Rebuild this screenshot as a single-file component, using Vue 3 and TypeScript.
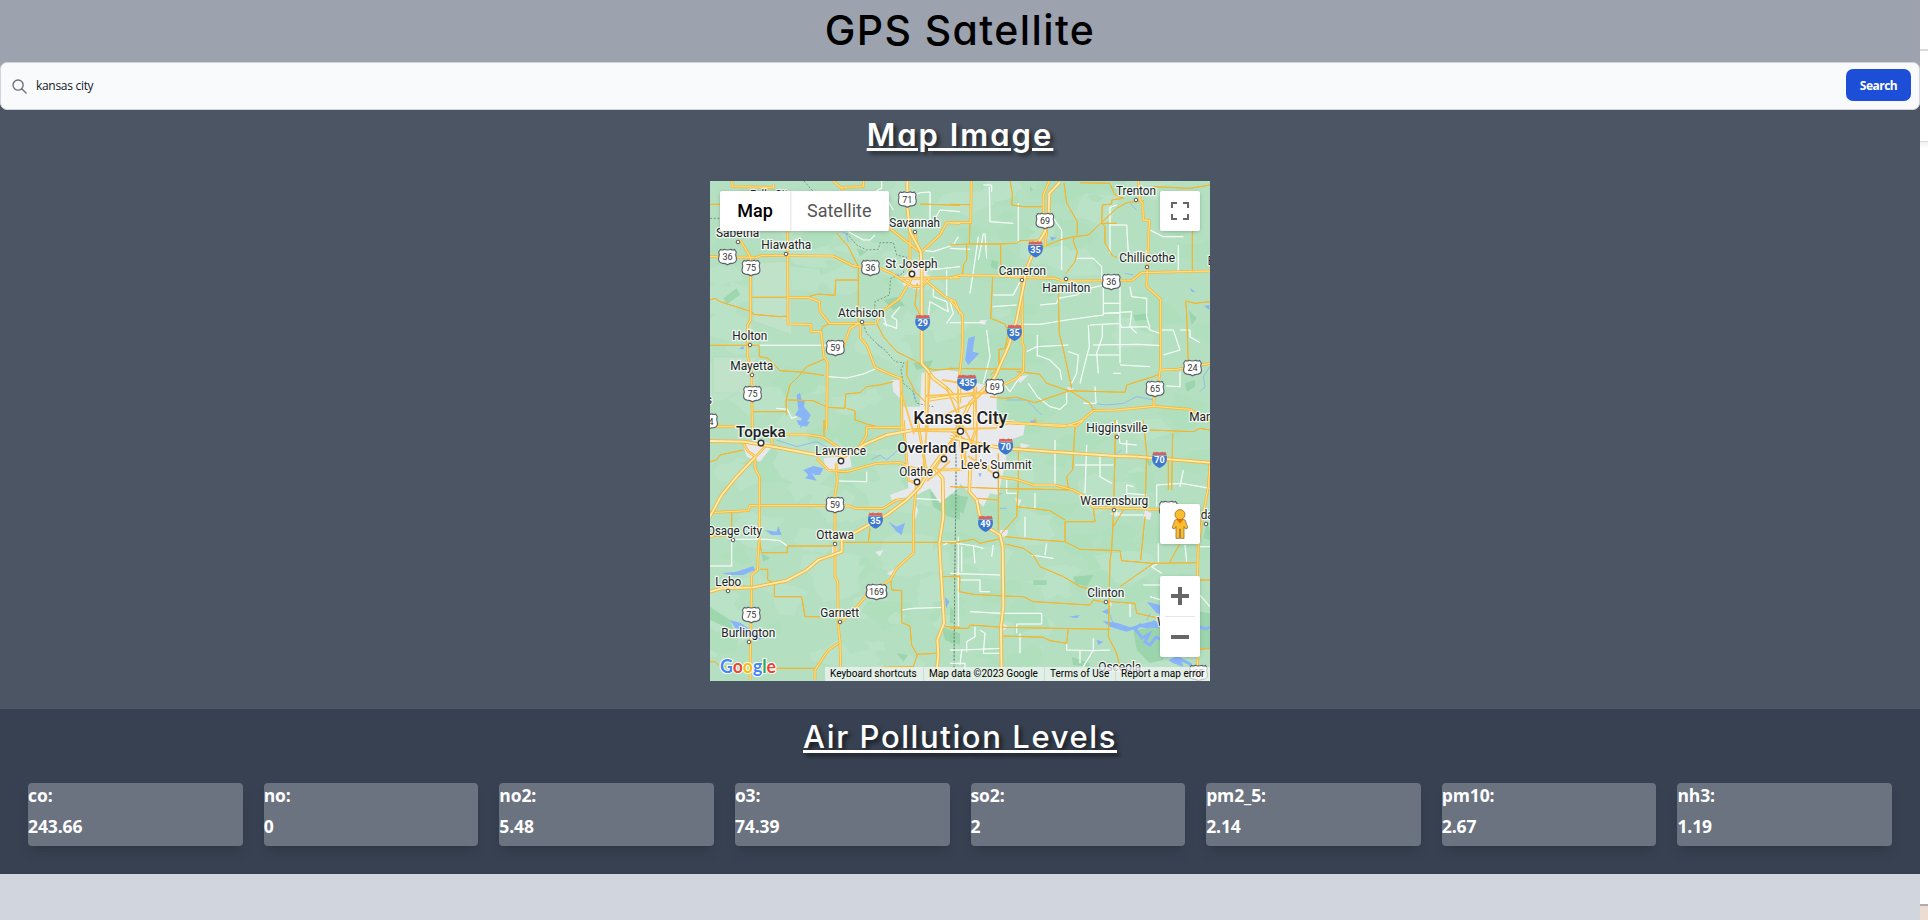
<script setup lang="ts">
type Kind = 'local' | 'minor' | 'primary' | 'highway'
interface Sheet {
  transform: string
  roads: Record<Kind, string>
  border: string
  urban: string
  water: string
  river: string
  forest: string
}
interface Place { name: string; x: number; y: number; w: number; size?: number; weight?: number }
interface Dot { x: number; y: number; r: number }
interface Shield { n: string; x: number; y: number }

const readings = [
  { label: 'co', value: '243.66' },
  { label: 'no', value: '0' },
  { label: 'no2', value: '5.48' },
  { label: 'o3', value: '74.39' },
  { label: 'so2', value: '2' },
  { label: 'pm2_5', value: '2.14' },
  { label: 'pm10', value: '2.67' },
  { label: 'nh3', value: '1.19' },
]

// Four map sheets, each drawn on its own grid at three units per pixel.
const sheets: Sheet[] = [
  {
    transform: 'translate(-10 -11) scale(.33333)',
    roads: {
      local: 'M178 526H380M382 620L440 624 490 612 525 597M445 185L490 210 510 210 525 195M228 715L262 718 275 745 290 740M690 66L690 175M545 33V55L530 62M625 85L660 68 690 66M660 240L700 245 760 225 775 200M550 430L560 470M600 410L575 440 590 450V475L550 460M700 350V380L740 395 745 425 690 395 685 440M690 172L720 120 780 125M690 300L780 290M740 460L760 430 750 395M740 300V380M565 95L580 120',
      minor: 'M30 103H60M155 382H264M325 380L355 372 405 376 407 330H475M475 288V458M30 390L45 385 60 395 155 425 160 433 240 440 264 438M30 526H178M178 528V560L205 565 240 602 300 606 372 616M372 568L320 590 300 615 270 645 258 690 260 735M262 690L340 692 382 712 435 715 437 672 480 668 500 650 540 645 580 635M440 715L465 722V750L510 765 540 772 600 772M530 460L550 500 590 545 640 570 665 585 700 600 780 595M622 572L620 615 645 665 680 700M410 190L445 230 475 290M363 485L368 470 390 460M660 102L780 106M157 725H260M652 340L645 405 662 440',
      primary: 'M95 33L97 50 220 52V42M400 33L430 60M420 52L490 50V33M540 295L575 310 600 325 780 323M780 160L740 158 720 195 665 245M665 320L700 350 735 380 765 395 780 430M635 325L600 385 545 425 530 460M30 260L170 262 185 256 400 258 460 288 485 292M120 210L152 262V450L143 465V560L155 610 157 780M262 180L264 462 333 464V484L363 486 372 560 382 575 380 780M264 382H325L358 395 360 425 388 460H525M480 460L482 505 500 525 525 592 575 615 603 625 606 780M480 458L450 475 430 530M630 190V330M565 172L620 215 665 250M645 190L655 240M600 325L640 350 665 350 690 325M30 770L110 770',
      highway: 'M622 33V75M622 110L630 185 662 245 665 300V580Q685 600 700 625L740 655 780 700M680 610V780M680 690L780 675',
    },
    border: 'M30 145H60M312 33L335 60 350 70M440 190L470 225 500 240 535 238 540 218H580L590 255 620 262 610 310 572 325 568 375 525 395 522 450M490 462L500 490 535 525 550 535 585 575 612 578 603 600 610 640 640 665 650 700 700 710',
    urban: 'M575 630L600 630 605 690 580 665ZM665 610L740 600 780 605V780H610V710H660ZM610 320L650 275 690 320 655 360 610 345Z',
    water: 'M290 675L300 668 305 690 315 690 312 710 332 735 325 750 300 775 305 745 285 735 295 720ZM117 536L130 528 132 538Z',
    river: 'M425 185L438 190 445 215M587 310L600 318M530 520L545 535M640 665L645 690',
    forest: 'M70 385L110 355 120 375 80 402ZM550 390L590 380 615 405 580 420ZM640 580L700 570 690 590 650 600ZM470 235L500 245 480 260Z',
  },
  {
    transform: 'translate(240 -11) scale(.33333)',
    roads: {
      local: 'M100 45H125V65M118 50L120 155 190 160M105 190L110 265M100 190L85 270M85 200L75 270 60 370M0 235L60 238M310 145L335 180V300M205 100V220M500 105L480 112V250M480 165H530L535 250M590 240V335M600 180L640 200H700M685 225V303M380 265H430L455 290V335M460 345V435L350 450 270 463H210M270 405L320 400 325 385 380 375 400 360 460 345M128 410L200 405M130 375H190L210 335M510 350V580M540 350L545 380 590 385V440L600 475M460 400H512M460 430L545 425 540 470 560 490M415 465L418 530 410 560 390 640M420 465L510 460 515 472 590 470 600 480 630 490M430 525L565 523 632 527M415 555H510M440 550L445 610M510 585L600 590M632 480H670L690 540 640 555M690 480H720V500L750 518M690 605V650L650 648M0 458H100M110 480L120 560 105 620 100 640M230 545L260 530 355 525M260 555L300 570 330 600 335 630M355 545L385 555 380 610 365 640M350 665V700L330 718 300 710 262 680 235 640M435 650L438 700H400M457 465V500L440 550M262 495V560M160 640L180 665 210 620M490 610H512',
      minor: 'M180 33L187 70 185 105 220 110H275M0 103L60 104M60 160L58 222 0 225M60 222H150L200 220 210 212 262 210M50 225V270L40 285 38 312M152 222V318M128 318L122 445 165 462 175 490 165 535 147 538V595L120 615M275 232L330 210 372 200 370 215 382 245 375 275 348 310M342 40L350 100 382 155V195M372 200L415 195 450 162 500 115 530 98 580 92M390 38L480 40 495 75 520 85 485 90V102L457 105 455 160 465 170V220L488 258 500 262M455 160H500M332 340L325 380 328 490 345 560 365 655M200 605L268 612 290 640 355 662 525 667 530 645 610 620 632 610M0 595L220 598M727 180V303M610 50L720 55 780 45M780 395L735 400 707 393 710 430 715 590M120 680L160 685 200 682 255 698 360 662 420 700 430 720M255 745L260 765',
      primary: 'M0 325L30 315 150 318 215 322 315 325 335 333 545 332 575 308 780 303M565 33L570 90 578 100 580 150 598 152 590 350 632 388V590L625 640 612 655V708M216 330L217 520 222 530 220 605 200 625 120 665M64 33L62 158 0 158M0 390L38 435V530L28 620M612 709L500 720 430 722 390 755 340 770 230 762 120 755M612 709L720 718 780 755M629 600L680 598 780 580M298 33L280 75V130L290 180 285 230',
      highway: 'M330 36L298 70 296 130 285 185 255 235 228 300 222 340 200 450 175 530 135 620 100 660 60 700 20 780M28 620V700M75 650V780M0 680L90 670',
    },
    border: '',
    urban: 'M0 610L70 635 140 655V780H0ZM90 450L110 450 105 465 90 460ZM200 620L235 615 210 640ZM350 650L372 655 360 665Z',
    water: 'M55 505L75 498 68 545 88 550 55 585 45 570ZM300 200L320 203 305 212ZM720 353L737 367 725 365ZM762 408L778 405V420ZM240 752L260 750 250 770Z',
    river: 'M430 700L470 705 520 700 560 680 612 690M170 690L230 690 260 720 275 735M780 590L760 620 765 650 750 665M525 310L550 315M560 120L540 100',
    forest: 'M125 270L145 275 140 300 122 290ZM550 435L595 430 590 450 555 452ZM705 640L735 630 735 650 710 665ZM715 420L740 445 725 465ZM240 50L250 60 240 65Z',
  },
  {
    transform: 'translate(-10 239) scale(.33333)',
    roads: {
      local: 'M100 358H200L240 362 262 378M95 360V438H30M410 183L500 185V155M640 235L725 240M605 570L640 565 730 562M775 350V470M730 375L742 370M728 365H780',
      minor: 'M95 275V330M30 125L50 120 60 105 130 90M30 348H95M178 360L185 398H262V378H400M430 367H780M180 448H203V480L223 490V530H305L315 590H360M510 325L505 365M573 482L575 510 605 512V608L630 618 635 675 652 705 640 740 550 742V760M150 745H345M30 725H45L60 740H80M650 703L708 700M730 470L780 468M735 620L780 622M372 0V50M30 5L60 20 85 20',
      primary: 'M165 112V145L178 170V350L172 450 155 465 150 780M408 130L412 185 405 225V470L413 485 415 620 420 665 422 740M420 610L480 550 500 525 570 480 590 445 640 400V290L650 190M415 670L385 690 345 750V780M350 115L385 150 440 155 530 130 600 128 640 145 720 150 780 148M30 278L145 272 150 257H370L450 258 465 265H550L590 240 610 238M230 42L330 45 370 52 420 85M130 70L145 95 170 112M470 95L500 45V22H610M610 0L625 180 650 190M652 0L680 160M216 42V75M200 75L165 112M30 350H40',
      highway: 'M30 515L65 505 160 502 260 482 320 450 355 420 425 395V360L500 318 560 285 620 240 660 200 680 165 720 110 760 60M30 63L130 65 230 82 350 105 400 100 430 110 500 70 560 45 640 30 780 32M30 290L65 225 110 170 165 112M708 150L728 175 730 290 718 370 732 610 712 660 715 700 708 780',
    },
    border: 'M768 0V210L764 480 762 780',
    urban: 'M610 0H780V200L720 250 690 205 650 225 575 240 570 225 625 205ZM130 75L180 60 220 75 180 125 140 110ZM370 115L450 105 455 140 380 155ZM398 370L412 380 410 405 395 400ZM525 395L550 390 540 410ZM560 460L590 445 580 470ZM640 245L655 270 645 300Z',
    water: 'M310 150L340 138 370 145 360 165 345 165 335 158 350 182 315 175 325 165ZM195 330L230 335 235 318 245 345 215 345ZM565 305L590 320 615 308 605 345 590 335ZM65 460L110 455 160 438 165 450 130 465 90 465ZM90 600L120 608 190 655 165 660 110 630ZM735 530L748 545 738 565ZM290 0L330 5 320 20 295 15Z',
    river: 'M230 60L290 80 350 65 415 100M515 118L540 105 560 120 600 85',
    forest: 'M30 560L90 600 100 630 30 600ZM690 215L780 225V300L745 290 700 260ZM725 620L780 640V675L735 660ZM590 700L625 705 610 725ZM185 400L210 415 190 425Z',
  },
  {
    transform: 'translate(240 239) scale(.33333)',
    roads: {
      local: 'M315 60V195M410 75L405 220M375 135H490M450 105V170L485 190M255 220V270M225 290V350M20 370L75 378 100 385M35 380V455M70 375L75 430M0 460L150 465M30 480H90V515H120M25 440V620M130 375L125 410M245 405L310 415M290 370L285 405M550 200L530 195V220L590 225M620 260V195L695 190 780 205M700 150L690 200M500 270V285L580 285M625 370V430L605 440 635 460M705 375L710 425M60 575L155 580H275V612H200V640M75 620V650L50 665V695M90 630L105 640 100 700 155 700M30 735L35 690 155 685M350 670V690L430 692 480 690M430 655V690L400 740M540 590V550M580 495H640M600 530L650 545M500 0L510 70 560 75M170 180V220H200M530 100V60M0 730H45V780M750 380H780M745 520L780 560M390 692V730M210 640V700M0 690H40',
      minor: 'M0 200L130 205 240 207 355 210M355 205L350 170 368 150 375 20M430 262L435 305H345V365M85 235L142 240M205 80V180L200 290 155 340M145 100V330M200 260L300 272 345 300M165 350L270 360 345 365 390 388 510 392 515 422 605 430 745 428M0 370L70 358 90 370 155 355M495 0V100L490 290 485 390 480 420 475 650 500 700 510 740M580 0L590 100 585 270M520 270L490 320M585 290L572 420M668 40L665 210M690 370L660 425M165 372L220 385 250 405 270 440 340 470 390 500 430 510M510 500L560 465 610 430M480 545L555 550 560 580 630 595M0 470H30L28 515 70 523 160 528 220 530 250 545 420 555 430 540 470 548M0 625H55L60 615 160 622 480 628M160 648L280 652 300 662 350 670 355 625M600 30L730 35 750 25 780 30M750 480H780M655 110V210M730 690L780 685',
      primary: 'M140 170L200 178 250 195H315L370 210 405 230 430 262 630 268M110 0L145 15 180 8 380 18 400 0M780 130L775 200 755 310 745 370 742 470M0 150L130 140M0 30L60 70M80 20L60 80M742 710V780',
      highway: 'M0 50L40 60 100 75 165 85 300 95 500 108 560 110 780 128M30 50L40 120 60 150 58 215 80 240 90 290 110 320 150 345 158 380 160 560 153 620 155 780',
    },
    border: 'M18 35V210L14 480 12 780',
    urban: 'M0 0H190L225 15 220 45 180 60 145 225 120 220 100 260 65 225 30 190 0 215ZM210 70L240 75 215 90ZM150 330L175 330 170 350 150 350ZM480 280L520 275 495 290ZM585 270L605 280 600 300 580 295ZM160 610L175 620 160 632ZM470 550L485 545V560ZM195 235L215 240 205 260Z',
    water: 'M590 545L630 555 650 585 620 580ZM455 575L480 563 478 585ZM458 603L500 608 540 622 600 605 640 610 630 625 570 622 530 635 480 620ZM355 590L390 585 380 595ZM85 160L95 160 90 172ZM195 140L205 145 195 150ZM440 660L460 665 445 675ZM655 720L690 705 700 740 670 730Z',
    river: 'M145 225L155 220M150 265L170 265M500 100L515 90M480 585L495 625M590 600L600 580',
    forest: 'M370 470L430 465 410 500 375 490ZM250 480L290 480V495H250ZM580 110L605 125 600 140ZM770 310L780 330V360L760 355ZM0 225L55 230 40 280 0 265ZM550 630L630 620 640 720 600 730 560 690ZM720 570L780 580V690L730 680ZM365 710L420 730 415 740 370 735ZM0 560L10 570V610H0ZM0 640H15V670H0Z',
  },
]

const kinds: Kind[] = ['local', 'minor', 'primary', 'highway']

const places: Place[] = [
  { name: 'Falls City', x: 40, y: 18, w: 43 },
  { name: 'Sabetha', x: 6, y: 56, w: 43.3 },
  { name: 'Hiawatha', x: 51.3, y: 68, w: 50 },
  { name: 'Savannah', x: 179.3, y: 45.7, w: 50.7 },
  { name: 'St Joseph', x: 175.3, y: 87, w: 52.3 },
  { name: 'Atchison', x: 128, y: 136, w: 46.7 },
  { name: 'Holton', x: 22.3, y: 159, w: 35 },
  { name: 'Mayetta', x: 20.3, y: 189, w: 43 },
  { name: 'Trenton', x: 406, y: 14.3, w: 40 },
  { name: 'Chillicothe', x: 409.3, y: 81.3, w: 55.7 },
  { name: 'Cameron', x: 288.7, y: 94, w: 47.3 },
  { name: 'Hamilton', x: 332.3, y: 111, w: 48 },
  { name: 'E', x: 497.7, y: 84, w: 6 },
  { name: 'Mar', x: 479.3, y: 240, w: 20.7 },
  { name: 's', x: -4, y: 222.5, w: 6 },
  { name: 'Topeka', x: 26, y: 256.3, w: 49.7, size: 14.5, weight: 500 },
  { name: 'Lawrence', x: 105.3, y: 274.3, w: 50.7 },
  { name: 'Overland Park', x: 187.3, y: 271.7, w: 93.3, size: 14.5, weight: 500 },
  { name: 'Olathe', x: 189.3, y: 295, w: 33.7 },
  { name: "Lee's Summit", x: 250.7, y: 288.3, w: 71 },
  { name: 'Osage City', x: -3, y: 354.3, w: 55 },
  { name: 'Ottawa', x: 106.3, y: 358.3, w: 37.7 },
  { name: 'Lebo', x: 5.3, y: 405.3, w: 26 },
  { name: 'Garnett', x: 110.3, y: 436.3, w: 38.7 },
  { name: 'Burlington', x: 11.3, y: 456, w: 54 },
  { name: 'Kansas City', x: 203.3, y: 243, w: 94, size: 17.5, weight: 500 },
  { name: 'Higginsville', x: 376.3, y: 251.3, w: 61.3 },
  { name: 'Warrensburg', x: 370.3, y: 324.3, w: 68 },
  { name: 'Clinton', x: 377.3, y: 416, w: 37 },
  { name: 'Osceola', x: 388.3, y: 490, w: 43 },
  { name: 'W', x: 447, y: 444.5, w: 11 },
  { name: 'da', x: 490.7, y: 338, w: 13 },
]

const dots: Dot[] = [
  [28, 61, 1.8], [76, 73, 1.8], [205, 51, 1.8], [202, 93, 2.7], [152, 141, 1.8], [40, 164, 1.8], [42, 194, 1.8],
  [426, 19, 1.8], [437, 86, 1.8], [312, 99, 1.8], [356, 98, 1.8], [51, 262, 2.8], [131, 280, 2.7], [234, 278, 2.7],
  [207, 301, 2.7], [250.5, 250.3, 3], [286, 294, 2.7], [23, 359, 1.8], [125, 363, 1.8], [18, 410, 1.8], [130, 441, 1.8],
  [39, 461, 1.8], [407, 256, 1.8], [404, 329, 1.8], [396, 421, 1.8], [496, 343, 1.8],
].map(([x, y, r]) => ({ x, y, r }))

const usRoutes: Shield[] = [
  { n: '71', x: 197.3, y: 18.5 }, { n: '36', x: 17.5, y: 76 }, { n: '75', x: 41, y: 87 }, { n: '36', x: 160.5, y: 87 },
  { n: '59', x: 125.3, y: 167 }, { n: '75', x: 42.5, y: 213 }, { n: '24', x: -1.5, y: 240.5 }, { n: '69', x: 335, y: 40 },
  { n: '36', x: 401.3, y: 101 }, { n: '24', x: 482.5, y: 187 }, { n: '65', x: 445, y: 208 }, { n: '69', x: 284.7, y: 206 },
  { n: '59', x: 125, y: 324 }, { n: '169', x: 166.5, y: 411 }, { n: '75', x: 41.3, y: 434 }, { n: '50', x: 458.5, y: 328 },
  { n: '65', x: 488.5, y: 492 },
]
const interstates: Shield[] = [
  { n: '29', x: 212.7, y: 141.5 }, { n: '35', x: 325.5, y: 68 }, { n: '35', x: 304.5, y: 151.5 }, { n: '435', x: 257, y: 201.5 },
  { n: '70', x: 295.7, y: 265.3 }, { n: '70', x: 449.5, y: 278.5 }, { n: '49', x: 275.5, y: 342.5 }, { n: '35', x: 165.5, y: 339.3 },
]
const stretch = (n: string) => (n.length > 2 ? 1.16 : 1)

// Irregular land-cover patches spread over the terrain.
let seed = 41
const next = () => (seed = (seed * 16807) % 2147483647) / 2147483647
const patches = Array.from({ length: 190 }, () => {
  const cx = next() * 500
  const cy = next() * 500
  const r = 6 + next() * 19
  const points = Array.from({ length: 10 }, (_, i) => {
    const a = (i / 10) * Math.PI * 2
    const d = r * (0.45 + next() * 0.8)
    return `${(cx + Math.cos(a) * d * 1.3).toFixed(1)},${(cy + Math.sin(a) * d * 0.8).toFixed(1)}`
  }).join(' ')
  const wooded = next() < (cx > 240 ? 0.62 : 0.4)
  return { points, tone: wooded ? '#afdfbc' : '#bae2c7' }
})
</script>

<template>
  <div class="window">
    <main class="page">
      <header class="title"><h1>GPS Satellite</h1></header>
      <form class="search" @submit.prevent>
        <svg class="lens" viewBox="0 0 16 16"><circle cx="6.5" cy="6.5" r="5.4" /><path d="M10.4 10.4L15 15" /></svg>
        <span class="query">kansas city</span>
        <button type="submit">Search</button>
      </form>

      <section class="map-section">
        <h2 class="map-heading">Map Image</h2>
        <div class="map">
          <svg class="terrain" width="500" height="500" viewBox="0 0 500 500">
            <rect width="500" height="500" fill="#b4e0c1" />
            <polygon v-for="(p, i) in patches" :key="i" :points="p.points" :fill="p.tone" />
            <path d="M80 80L82 154 43 140V82Z M3 176H46V212H3Z" fill="#bfe2c9" stroke="#b3d9bd" stroke-width=".6" />
            <g v-for="(s, i) in sheets" :key="'l' + i" :transform="s.transform">
              <path :d="s.forest" fill="#94d2a5" opacity=".75" />
              <path :d="s.urban" fill="#e8e9ed" />
              <path :d="s.water" fill="#8ab4f8" />
              <path :d="s.river" class="river" />
            </g>
            <path d="M425 448l5-4 8 2 6-5 8 4 6 8-4 7-8-4-6 8-5-3 4-8-7 4z" fill="none" stroke="#8ab4f8" stroke-width="3" />
            <path d="M489 446l7 2 4-2M470 478l10 5 4 8" fill="none" stroke="#8ab4f8" stroke-width="3" />
            <g v-for="(s, i) in sheets" :key="'b' + i" :transform="s.transform"><path :d="s.border" class="border" /></g>
            <g v-for="k in kinds" :key="k">
              <g v-for="(s, i) in sheets" :key="'c' + i" :transform="s.transform"><path :d="s.roads[k]" :class="['road', k]" /></g>
              <g v-for="(s, i) in sheets" :key="'f' + i" :transform="s.transform"><path :d="s.roads[k]" :class="['road', k + '-fill']" /></g>
            </g>
            <g class="metro">
              <path d="M191 210L204 253M220 192L217 245 212 300M232 199L264 204M216 215L250 213 278 212M236 205L250 240 262 262 280 268M264 204L267 240 266 283M204 249L250 248 287 247M248 208L249 250M240 280L232 288 217 300M255 262L256 285M220 240L262 222 285 200M245 255L236 272 225 288M258 275L286 294" />
            </g>
            <circle v-for="(d, i) in dots" :key="'d' + i" :cx="d.x" :cy="d.y" :r="d.r" class="dot" :class="{ big: d.r > 2 }" />

            <g v-for="(s, i) in usRoutes" :key="'u' + i" :transform="`translate(${s.x} ${s.y})`">
              <path :transform="`scale(${stretch(s.n)} 1)`" class="us" d="M-7-7.5Q-5-6.4-3.4-7.7Q0-6.2 3.4-7.7Q5-6.4 7-7.5L8.8-5Q7.7-2.5 8.8.6Q9.6 5.3 5.5 6.1Q2 6.2 0 7.8Q-2 6.2-5.5 6.1Q-9.6 5.3-8.8.6Q-7.7-2.5-8.8-5Z" />
              <text class="us-text" y="3.2">{{ s.n }}</text>
            </g>
            <g v-for="(s, i) in interstates" :key="'i' + i" :transform="`translate(${s.x} ${s.y})`">
              <g :transform="`scale(${s.n.length > 2 ? 1.32 : 1} 1)`">
                <path fill="#3d78cf" d="M-7-4H7C8.500 2 6 6 0 8.500C-6 6-8.500 2-7-4Z" />
                <path fill="#d8605d" d="M-6-7.800Q-4.500-6.800-3-7.800Q0-6.400 3-7.800Q4.500-6.800 6-7.800L7.200-4.600H-7.200Z" />
              </g>
              <text class="inter-text" y="3.8">{{ s.n }}</text>
            </g>

            <text
              v-for="p in places" :key="p.name" class="place" :x="p.x" :y="p.y" :textLength="p.w"
              lengthAdjust="spacingAndGlyphs" :font-size="p.size ?? 12" :font-weight="p.weight ?? 400"
            >{{ p.name }}</text>

            <text class="google" x="10" y="491.500" textLength="56" lengthAdjust="spacingAndGlyphs"><tspan fill="#4285f4">G</tspan><tspan fill="#ea4335">o</tspan><tspan fill="#fbbc04">o</tspan><tspan fill="#4285f4">g</tspan><tspan fill="#34a853">l</tspan><tspan fill="#ea4335">e</tspan></text>
          </svg>

          <div class="control types"><span class="active">Map</span><span>Satellite</span></div>
          <div class="control full">
            <svg width="18" height="18" viewBox="0 0 18 18"><path fill="#666" d="M0 0v6h2V2h4V0zM12 0v2h4v4h2V0zM16 12v4h-4v2h6v-6zM2 12H0v6h6v-2H2z" /></svg>
          </div>
          <div class="control pegman">
            <svg width="18" height="30" viewBox="0 0 18 30">
              <path d="M5.500 10.500H12.500Q14 10.500 14.500 12L16.800 19L14.500 20L13 17.500V29.400H9.500V20H8.500V29.400H5V17.500L3.500 20L1.200 19L3.500 12Q4 10.500 5.500 10.500Z" fill="#fbbc2d" stroke="#8f7134" stroke-width=".8" />
              <circle cx="9" cy="5.600" r="5" fill="#fbbc2d" stroke="#8f7134" stroke-width=".8" />
              <path d="M5.500 10.500H12.500L9 14.500Z" fill="#e8710a" />
            </svg>
          </div>
          <div class="control zoom">
            <span><svg width="18" height="18" viewBox="0 0 18 18"><path fill="#666" d="M7 0h4v7h7v4h-7v7H7v-7H0V7h7z" /></svg></span>
            <i></i>
            <span><svg width="18" height="18" viewBox="0 0 18 18"><path fill="#666" d="M0 7h18v4H0z" /></svg></span>
          </div>
          <div class="credits">
            <span class="keys">Keyboard shortcuts</span><span class="data">Map data ©2023 Google</span><span class="terms">Terms of Use</span><span class="report">Report a map error</span>
          </div>
        </div>
      </section>

      <section class="air">
        <h2 class="air-heading">Air Pollution Levels</h2>
        <div class="cards">
          <article v-for="r in readings" :key="r.label" class="card">
            <p>{{ r.label }}:</p>
            <p>{{ r.value }}</p>
          </article>
        </div>
      </section>
    </main>
    <aside class="edge"><div class="edge-top"></div><div class="edge-tab"></div><div class="edge-rest"></div><div class="edge-foot"></div></aside>
  </div>
</template>

<style>
body { margin: 0; overflow: hidden; }
</style>

<style scoped>
* { box-sizing: border-box; }
.window { display: flex; width: 1928px; height: 920px; font-family: "Open Sans", "Noto Sans", sans-serif; }
.page { width: 1920px; background: #d1d5dd linear-gradient(#9ca3af 86px, #4b5563 86px 110px, transparent 110px); }
h1, h2, p { margin: 0; }
h1, h2 { font-family: Inter, Lato, sans-serif; font-feature-settings: "cv11"; text-align: center; white-space: nowrap; }
.title { height: 62px; background: #9ca3af; }
h1 { font-size: 41px; line-height: 60px; color: #000; font-weight: 500; letter-spacing: 1.4px; }
.search {
  display: flex; align-items: center; height: 48px; padding: 0 8px 0 11px;
  border: 1px solid #d1d5db; border-radius: 7px; background: #f9fafb;
}
.lens { width: 15px; height: 15px; margin-right: 9px; fill: none; stroke: #6b7280; stroke-width: 1.5; stroke-linecap: round; }
.query { flex: 1; font-size: 12px; color: #111827; letter-spacing: -.3px; padding-bottom: 2px; }
button {
  width: 65px; height: 32px; padding: 0; border: 0; border-radius: 7px; background: #1d4ed8; color: #fff;
  font: 700 12px "Open Sans", "Noto Sans", sans-serif; letter-spacing: -.5px; margin-bottom: 2px;
}
.map-section { height: 599px; background: #4b5563; display: flex; flex-direction: column; align-items: center; }
h2 {
  color: #fff; font-size: 31px; line-height: 36px; text-decoration: underline;
  text-decoration-thickness: 3px; text-underline-offset: 2px; text-shadow: 3px 3px 4px rgba(0, 0, 0, .6);
}
.map-heading { height: 71px; padding-top: 7px; font-weight: 600; letter-spacing: 2px; }
.map { position: relative; width: 500px; height: 500px; overflow: hidden; font-family: Roboto, sans-serif; }
.terrain { display: block; }
.road { fill: none; stroke-linejoin: round; }
.local { stroke: #e4f4ea; stroke-width: 3.6; }
.local-fill { stroke: #fff; stroke-width: 2; }
.minor, .minor-fill { stroke: #f3b62f; stroke-width: 3; }
.primary { stroke: #f5b531; stroke-width: 8; }
.primary-fill { stroke: #ffdc82; stroke-width: 3.8; }
.highway { stroke: #f6b63a; stroke-width: 11; }
.highway-fill { stroke: #ffecb3; stroke-width: 5.5; }
.river { fill: none; stroke: #8ab4f8; stroke-width: 2.5; }
.border { fill: none; stroke: #6f8c7a; stroke-width: 2.6; stroke-dasharray: 6 5; }
.metro { fill: none; stroke: #fac456; stroke-width: 1.8; }
.dot { fill: #fff; stroke: #555; stroke-width: 1; }
.dot.big { stroke: #333; stroke-width: 1.4; }
.us { fill: #fff; stroke: #5b6066; stroke-width: 1.1; }
.us-text { font-size: 9px; text-anchor: middle; fill: #333; letter-spacing: -.1px; }
.inter-text { font-size: 9px; font-weight: 700; text-anchor: middle; fill: #fff; }
.place { fill: #202124; stroke: #fff; stroke-opacity: .75; stroke-width: 2.6px; stroke-linejoin: round; paint-order: stroke; }
.google { font: 700 18px Lato, sans-serif; stroke: #fff; stroke-width: 2px; paint-order: stroke; }
.control { position: absolute; background: #fff; border-radius: 2px; box-shadow: 0 1px 4px -1px rgba(0, 0, 0, .3); }
.types { left: 10px; top: 10px; width: 168.5px; height: 40px; display: flex; font-size: 18px; line-height: 40px; color: #565656; }
.types span { flex: 1; text-align: center; }
.types .active { flex: 0 0 70px; color: #000; font-weight: 500; box-shadow: 1px 0 2px rgba(0, 0, 0, .12); }
.full, .pegman { left: 450px; width: 40px; height: 40px; display: flex; align-items: center; justify-content: center; }
.full { top: 10px; }
.pegman { top: 323px; padding-right: 1px; }
.zoom { left: 450px; top: 395px; width: 40px; height: 81px; display: flex; flex-direction: column; align-items: center; }
.zoom span { display: flex; align-items: center; height: 40px; }
.zoom i { width: 30px; height: 1px; background: #e6e6e6; }
.credits {
  position: absolute; left: 115px; right: 0; bottom: 0; height: 14px; display: flex;
  background: rgba(245, 245, 245, .7); font-size: 10px; line-height: 14px; color: #000; white-space: nowrap;
}
.credits span { padding-left: 5px; }
.credits span + span { border-left: 1px solid rgba(200, 215, 205, .8); }
.keys { width: 98px; }
.data { width: 121px; }
.terms { width: 71px; }
.report { flex: 1; }
.air { height: 165px; padding: 0 28px; background: #374151; }
.air-heading { height: 74px; padding-top: 10px; font-weight: 500; letter-spacing: 1.6px; }
.cards { display: grid; grid-template-columns: repeat(8, 1fr); gap: 21px; }
.card {
  height: 63px; border-radius: 4px; background: #6b7280; color: #fff;
  box-shadow: 0 9px 13px -3px rgba(0, 0, 0, .1), 0 4px 6px -4px rgba(0, 0, 0, .1);
}
.card p { height: 31px; font-size: 17.5px; line-height: 24px; font-weight: 700; letter-spacing: -.1px; }
.edge { width: 8px; background: #fff; display: flex; flex-direction: column; }
.edge-top { height: 51px; border-bottom: 2px solid #dadada; }
.edge-tab { height: 91px; border-bottom: 1px solid #d8d8d8; }
.edge-rest { flex: 1; background: linear-gradient(#f2f2f2, #fff 7px); }
.edge-foot { height: 16px; background: #ecdcd2; border-top: 2px solid #b5aaaa; }
</style>
